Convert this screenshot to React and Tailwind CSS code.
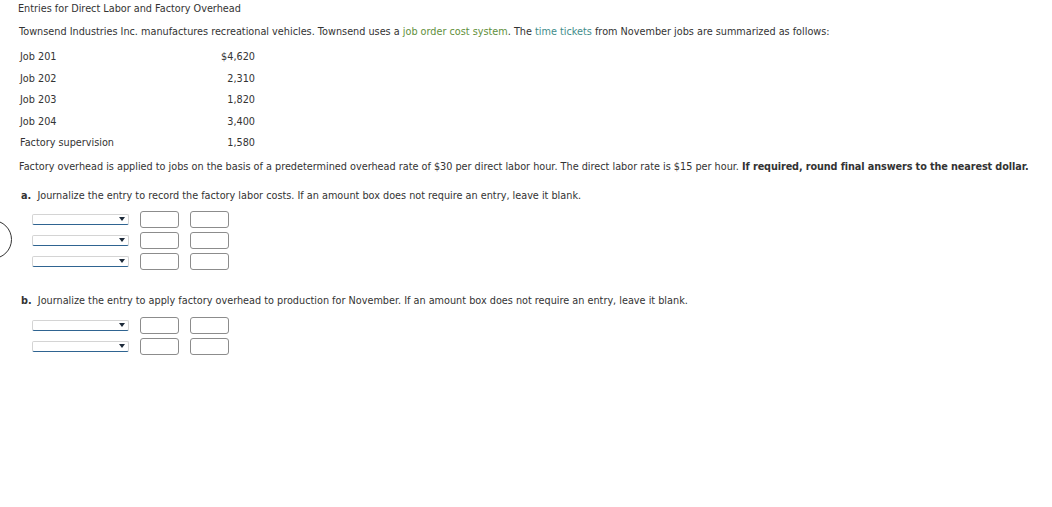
import React from 'react'

const jobs = [
  ['Job 201', '$4,620'],
  ['Job 202', '2,310'],
  ['Job 203', '1,820'],
  ['Job 204', '3,400'],
  ['Factory supervision', '1,580'],
]

function Select() {
  return (
    <div className="relative w-[97px] h-[11px] rounded-[2px] border border-[#d4d4d4] border-b-[1.5px] border-b-[#2f6491] bg-white">
      <span className="absolute right-[3px] top-[2px] w-0 h-0 border-l-[3px] border-r-[3px] border-t-[4px] border-l-transparent border-r-transparent border-t-[#1d2a3a]" />
    </div>
  )
}

function Box() {
  return <div className="w-[39px] h-[17px] rounded-[3px] border border-[#8c8c8c] bg-white" />
}

function EntryRows({ count }) {
  return (
    <div className="flex flex-col pl-[14px]">
      {Array.from({ length: count }).map((_, i) => (
        <div key={i} className="h-[21px] flex items-center gap-[11px]">
          <Select />
          <Box />
          <Box />
        </div>
      ))}
    </div>
  )
}

export default function App() {
  return (
    <div className="relative min-h-[507px] bg-white overflow-hidden text-[9.7px] text-[#333] font-['DejaVu_Sans',Verdana,sans-serif] px-[18px] pt-[1px]">
      <div className="h-[16px] leading-[16px]">Entries for Direct Labor and Factory Overhead</div>

      <p className="mt-[7px] h-[16px] leading-[16px] pl-[1px] whitespace-nowrap">
        Townsend Industries Inc. manufactures recreational vehicles. Townsend uses a{' '}
        <span className="text-[#5f8f3c]">job order cost system</span>. The{' '}
        <span className="text-[#3f8c8a]">time tickets</span> from November jobs are summarized as follows:
      </p>

      <div className="mt-[7px] pl-[2px] w-[237px]">
        {jobs.map(([label, amount]) => (
          <div key={label} className="h-[21.5px] flex items-center justify-between">
            <span>{label}</span>
            <span>{amount}</span>
          </div>
        ))}
      </div>

      <p className="mt-[4px] h-[16px] leading-[16px] pl-[1px] whitespace-nowrap">
        Factory overhead is applied to jobs on the basis of a predetermined overhead rate of $30 per direct labor hour. The direct labor rate is $15 per hour.{' '}
        <span className="font-bold tracking-[-0.1px]">If required, round final answers to the nearest dollar.</span>
      </p>

      <p className="mt-[13px] h-[16px] leading-[16px] pl-[3px]">
        <span className="font-bold">a.</span>&nbsp; Journalize the entry to record the factory labor costs. If an amount box does not require an entry, leave it blank.
      </p>
      <div className="mt-[5px]">
        <EntryRows count={3} />
      </div>

      <p className="mt-[21px] h-[16px] leading-[16px] pl-[3px]">
        <span className="font-bold">b.</span>&nbsp; Journalize the entry to apply factory overhead to production for November. If an amount box does not require an entry, leave it blank.
      </p>
      <div className="mt-[6px]">
        <EntryRows count={2} />
      </div>

      <div className="absolute left-[-27px] top-[220px] w-[39px] h-[39px] rounded-full border-[1.5px] border-[#333]" />
    </div>
  )
}
